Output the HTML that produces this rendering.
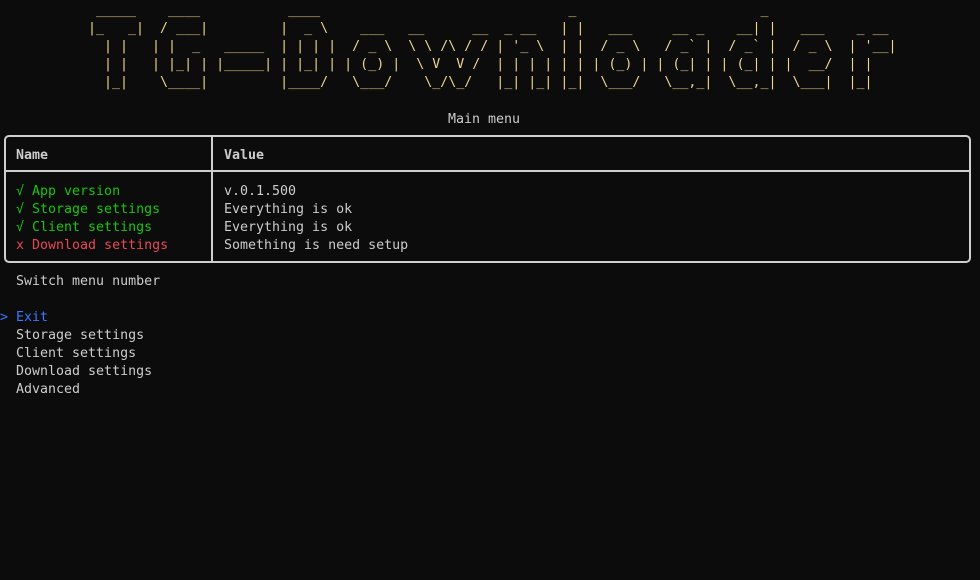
<!DOCTYPE html>
<html><head><meta charset="utf-8"><style>
html,body{margin:0;padding:0;background:#0c0c0c;width:980px;height:580px;overflow:hidden}
body{position:relative;font-family:"DejaVu Sans Mono","Liberation Mono",monospace;font-size:13.3px;line-height:18px;color:#cccccc}
pre{margin:0;font:inherit;position:absolute;white-space:pre}
.art{left:88px;top:2px;color:#f2d58a}
.l{position:absolute;white-space:pre;margin-top:3px}
.g{color:#16c60c}.r{color:#e74856}.b{color:#3b78ff}
.box{position:absolute;left:4px;top:135px;width:963px;height:124px;border:2px solid #cfcfcf;border-radius:5px;box-sizing:content-box}
.vd{position:absolute;left:211px;top:136px;width:2px;height:126px;background:#cfcfcf}
.hd{position:absolute;left:5px;top:170px;width:964px;height:2px;background:#cfcfcf}
</style></head><body>
<pre class="art"> _____    ____           ____                               _                       _
|_   _|  / ___|         |  _ \    ___   __      __  _ __   | |   ___     __ _    __| |   ___    _ __
  | |   | |  _   _____  | | | |  / _ \  \ \ /\ / / | '_ \  | |  / _ \   / _` |  / _` |  / _ \  | '__|
  | |   | |_| | |_____| | |_| | | (_) |  \ V  V /  | | | | | | | (_) | | (_| | | (_| | |  __/  | |
  |_|    \____|         |____/   \___/    \_/\_/   |_| |_| |_|  \___/   \__,_|  \__,_|  \___|  |_|</pre>
<div class="l" style="left:448px;top:108px">Main menu</div>
<div class="box"></div><div class="vd"></div><div class="hd"></div>
<div class="l" style="left:16px;top:144px;font-weight:bold">Name</div>
<div class="l" style="left:224px;top:144px;font-weight:bold">Value</div>
<div class="l g" style="left:16px;top:180px">√ App version</div>
<div class="l g" style="left:16px;top:198px">√ Storage settings</div>
<div class="l g" style="left:16px;top:216px">√ Client settings</div>
<div class="l r" style="left:16px;top:234px">x Download settings</div>
<div class="l" style="left:224px;top:180px">v.0.1.500</div>
<div class="l" style="left:224px;top:198px">Everything is ok</div>
<div class="l" style="left:224px;top:216px">Everything is ok</div>
<div class="l" style="left:224px;top:234px">Something is need setup</div>
<div class="l" style="left:16px;top:270px">Switch menu number</div>
<div class="l b" style="left:0px;top:306px">&gt; Exit</div>
<div class="l" style="left:16px;top:324px">Storage settings</div>
<div class="l" style="left:16px;top:342px">Client settings</div>
<div class="l" style="left:16px;top:360px">Download settings</div>
<div class="l" style="left:16px;top:378px">Advanced</div>
</body></html>
